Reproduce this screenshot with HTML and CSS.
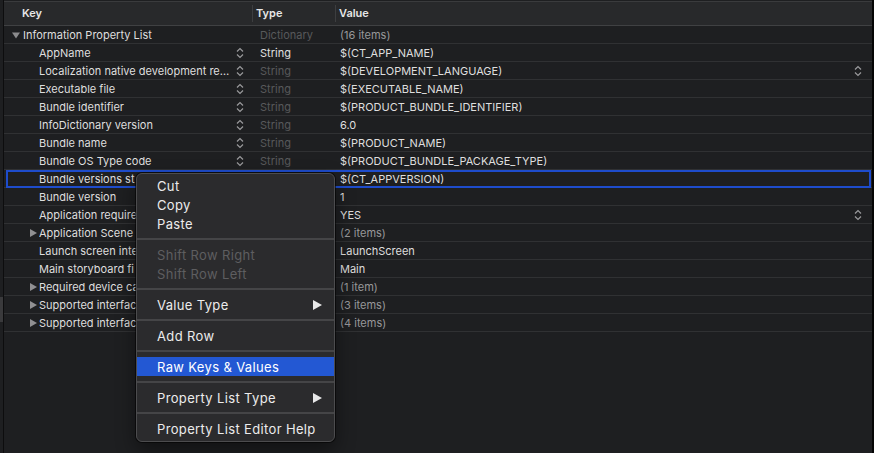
FILE: index.html
```html
<!DOCTYPE html>
<html>
<head>
<meta charset="utf-8">
<link rel="stylesheet" href="styles.css">
</head>
<body>
<div class="window">
  <div class="gutter"><div class="gutter-space"></div><div class="gutter-block"></div></div>
  <div class="table">
    <div class="header">
      <div class="hcell hkey">Key</div>
      <div class="hcell htype">Type</div>
      <div class="hcell hvalue">Value</div>
    </div>
    <div class="rows">
      <div class="row">
        <div class="kcell root"><svg class="disc" width="8" height="8" viewBox="0 0 8 8"><path d="M0 1.5H8L4 7.5Z"/></svg><span class="ktext">Information Property List</span></div>
        <div class="tcell dim">Dictionary</div>
        <div class="vcell gray">(16 items)</div>
      </div>
      <div class="row">
        <div class="kcell child"><span class="ktext">AppName</span><svg class="step" width="8" height="12" viewBox="0 0 8 12"><path d="M1 4.5L4 1.5L7 4.5M1 7.5L4 10.5L7 7.5"/></svg></div>
        <div class="tcell">String</div>
        <div class="vcell">$(CT_APP_NAME)</div>
      </div>
      <div class="row">
        <div class="kcell child"><span class="ktext">Localization native development re…</span><svg class="step" width="8" height="12" viewBox="0 0 8 12"><path d="M1 4.5L4 1.5L7 4.5M1 7.5L4 10.5L7 7.5"/></svg></div>
        <div class="tcell dim">String</div>
        <div class="vcell"><span>$(DEVELOPMENT_LANGUAGE)</span><svg class="step" width="8" height="12" viewBox="0 0 8 12"><path d="M1 4.5L4 1.5L7 4.5M1 7.5L4 10.5L7 7.5"/></svg></div>
      </div>
      <div class="row">
        <div class="kcell child"><span class="ktext">Executable file</span><svg class="step" width="8" height="12" viewBox="0 0 8 12"><path d="M1 4.5L4 1.5L7 4.5M1 7.5L4 10.5L7 7.5"/></svg></div>
        <div class="tcell dim">String</div>
        <div class="vcell">$(EXECUTABLE_NAME)</div>
      </div>
      <div class="row">
        <div class="kcell child"><span class="ktext">Bundle identifier</span><svg class="step" width="8" height="12" viewBox="0 0 8 12"><path d="M1 4.5L4 1.5L7 4.5M1 7.5L4 10.5L7 7.5"/></svg></div>
        <div class="tcell dim">String</div>
        <div class="vcell">$(PRODUCT_BUNDLE_IDENTIFIER)</div>
      </div>
      <div class="row">
        <div class="kcell child"><span class="ktext">InfoDictionary version</span><svg class="step" width="8" height="12" viewBox="0 0 8 12"><path d="M1 4.5L4 1.5L7 4.5M1 7.5L4 10.5L7 7.5"/></svg></div>
        <div class="tcell dim">String</div>
        <div class="vcell">6.0</div>
      </div>
      <div class="row">
        <div class="kcell child"><span class="ktext">Bundle name</span><svg class="step" width="8" height="12" viewBox="0 0 8 12"><path d="M1 4.5L4 1.5L7 4.5M1 7.5L4 10.5L7 7.5"/></svg></div>
        <div class="tcell dim">String</div>
        <div class="vcell">$(PRODUCT_NAME)</div>
      </div>
      <div class="row">
        <div class="kcell child"><span class="ktext">Bundle OS Type code</span><svg class="step" width="8" height="12" viewBox="0 0 8 12"><path d="M1 4.5L4 1.5L7 4.5M1 7.5L4 10.5L7 7.5"/></svg></div>
        <div class="tcell dim">String</div>
        <div class="vcell">$(PRODUCT_BUNDLE_PACKAGE_TYPE)</div>
      </div>
      <div class="row selected">
        <div class="kcell child"><span class="ktext">Bundle versions st</span></div>
        <div class="tcell dim"></div>
        <div class="vcell">$(CT_APPVERSION)</div>
      </div>
      <div class="row">
        <div class="kcell child"><span class="ktext">Bundle version</span></div>
        <div class="tcell dim"></div>
        <div class="vcell">1</div>
      </div>
      <div class="row">
        <div class="kcell child"><span class="ktext">Application require</span></div>
        <div class="tcell dim"></div>
        <div class="vcell"><span>YES</span><svg class="step" width="8" height="12" viewBox="0 0 8 12"><path d="M1 4.5L4 1.5L7 4.5M1 7.5L4 10.5L7 7.5"/></svg></div>
      </div>
      <div class="row">
        <div class="kcell sub"><svg class="disc" width="7" height="8" viewBox="0 0 7 8"><path d="M0 0L7 4L0 8Z"/></svg><span class="ktext">Application Scene</span></div>
        <div class="tcell dim"></div>
        <div class="vcell gray">(2 items)</div>
      </div>
      <div class="row">
        <div class="kcell child"><span class="ktext">Launch screen inte</span></div>
        <div class="tcell dim"></div>
        <div class="vcell">LaunchScreen</div>
      </div>
      <div class="row">
        <div class="kcell child"><span class="ktext">Main storyboard fi</span></div>
        <div class="tcell dim"></div>
        <div class="vcell">Main</div>
      </div>
      <div class="row">
        <div class="kcell sub"><svg class="disc" width="7" height="8" viewBox="0 0 7 8"><path d="M0 0L7 4L0 8Z"/></svg><span class="ktext">Required device ca</span></div>
        <div class="tcell dim"></div>
        <div class="vcell gray">(1 item)</div>
      </div>
      <div class="row">
        <div class="kcell sub"><svg class="disc" width="7" height="8" viewBox="0 0 7 8"><path d="M0 0L7 4L0 8Z"/></svg><span class="ktext">Supported interfac</span></div>
        <div class="tcell dim"></div>
        <div class="vcell gray">(3 items)</div>
      </div>
      <div class="row">
        <div class="kcell sub"><svg class="disc" width="7" height="8" viewBox="0 0 7 8"><path d="M0 0L7 4L0 8Z"/></svg><span class="ktext">Supported interfac</span></div>
        <div class="tcell dim"></div>
        <div class="vcell gray">(4 items)</div>
      </div>
    </div>
  </div>
  <div class="edge"></div>

  <div class="menu">
    <div class="mi">Cut</div>
    <div class="mi">Copy</div>
    <div class="mi">Paste</div>
    <div class="sep"></div>
    <div class="mi disabled">Shift Row Right</div>
    <div class="mi disabled">Shift Row Left</div>
    <div class="sep"></div>
    <div class="mi"><span>Value Type</span><svg class="arrow" width="9" height="10" viewBox="0 0 9 10"><path d="M0 0L9 5L0 10Z"/></svg></div>
    <div class="sep"></div>
    <div class="mi">Add Row</div>
    <div class="sep"></div>
    <div class="mi active">Raw Keys &amp; Values</div>
    <div class="sep"></div>
    <div class="mi"><span>Property List Type</span><svg class="arrow" width="9" height="10" viewBox="0 0 9 10"><path d="M0 0L9 5L0 10Z"/></svg></div>
    <div class="sep"></div>
    <div class="mi">Property List Editor Help</div>
  </div>
</div>
</body>
</html>
```

FILE: styles.css
```css
* { box-sizing: border-box; }
html, body {
  margin: 0;
  padding: 0;
  background: #1e1f21;
  font-family: "Inter", "Helvetica Neue", "Liberation Sans", sans-serif;
  -webkit-font-smoothing: antialiased;
}
.window {
  position: relative;
  display: flex;
  width: 874px;
  height: 453px;
  background: #1e1f21;
  overflow: hidden;
}
.gutter {
  width: 4px;
  flex: none;
  border-right: 1px solid #0d0d0e;
  display: flex;
  flex-direction: column;
}
.gutter-space { height: 297px; }
.gutter-block { height: 25px; background: #3a3a3c; }
.table {
  flex: 1;
  display: flex;
  flex-direction: column;
  padding-top: 1px;
  background: #1e1f21;
}
.edge {
  width: 2px;
  flex: none;
  background: #050505;
}
.header {
  display: grid;
  grid-template-columns: 249px 83px 1fr;
  height: 25px;
  background: #28292b;
  border-top: 1px solid #3a3b3d;
  border-bottom: 1px solid #404143;
  font-size: 11px;
  font-weight: 600;
  color: #e6e6e6;
}
.hcell {
  display: flex;
  align-items: center;
  padding-bottom: 1px;
}
.hkey { padding-left: 18px; border-right: 1px solid #3d3e40; margin: 3px 0; }
.htype { padding-left: 3px; border-right: 1px solid #3d3e40; margin: 3px 0; }
.hvalue { padding-left: 3px; }
.rows { display: flex; flex-direction: column; }
.row {
  position: relative;
  display: grid;
  grid-template-columns: 249px 83px 1fr;
  height: 18px;
  border-bottom: 1px solid #303133;
  font-size: 11px;
  color: #dedede;
}
.row.selected::after {
  content: "";
  position: absolute;
  left: 2px;
  right: 1px;
  top: 0;
  bottom: -1px;
  border: 2px solid #1e4ccc;
  pointer-events: none;
}
.kcell {
  display: flex;
  align-items: center;
  min-width: 0;
  padding-right: 9px;
}
.kcell.root { padding-left: 8px; }
.kcell.child { padding-left: 35px; }
.kcell.sub { padding-left: 26px; }
.kcell.root .disc { fill: #8b8b8d; margin-right: 3px; }
.kcell.sub .disc { fill: #909092; margin-right: 2px; }
.ktext {
  flex: 1;
  min-width: 0;
  white-space: nowrap;
  overflow: hidden;
}
.step {
  flex: none;
  fill: none;
  stroke: #9a9a9c;
  stroke-width: 1.2;
}
.tcell {
  display: flex;
  align-items: center;
  padding-left: 7px;
  color: #e0e0e0;
}
.tcell.dim { color: #58595b; }
.vcell {
  display: flex;
  align-items: center;
  justify-content: space-between;
  padding-left: 4px;
  padding-right: 10px;
  color: #dedede;
  white-space: nowrap;
}
.vcell.gray { color: #98989a; }

.menu {
  position: absolute;
  left: 136px;
  top: 173px;
  width: 199px;
  padding: 2px 0 3px;
  background: #2b2b2d;
  border: 1px solid #4c4c4e;
  border-radius: 6px;
  box-shadow: 0 0 0 1px rgba(0,0,0,0.55), 0 8px 20px rgba(0,0,0,0.45);
  font-size: 13px;
  letter-spacing: 0.35px;
  color: #ececec;
}
.mi {
  height: 19px;
  display: flex;
  align-items: center;
  justify-content: space-between;
  padding-left: 20px;
  padding-right: 12px;
  white-space: nowrap;
}
.mi.disabled { color: #5e5e60; }
.mi.active { background: #2358d3; color: #ffffff; }
.arrow { fill: #e8e8e8; }
.sep {
  height: 2px;
  margin: 5px 0;
  background: #454547;
}
```
